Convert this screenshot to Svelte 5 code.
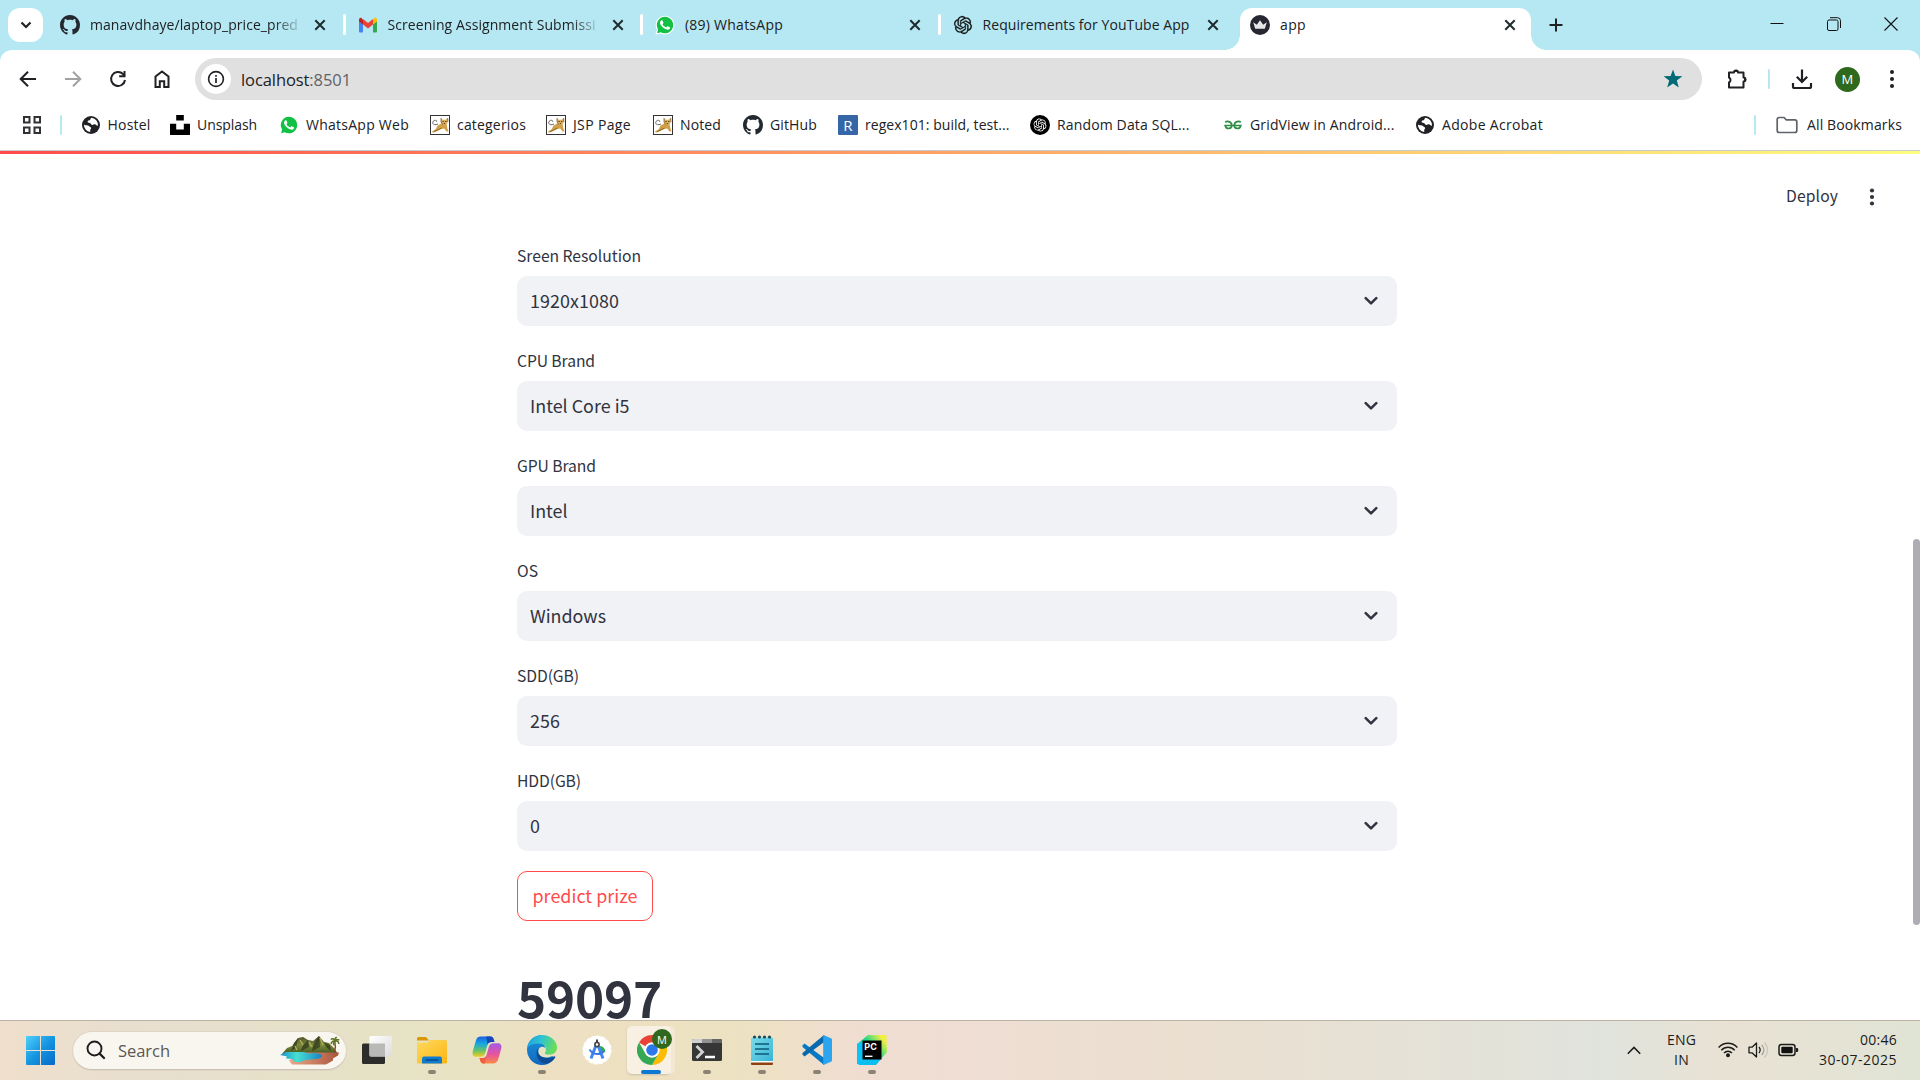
<script>
  const tabs = [
    { icon: 'github', fade: true, width: 208, title: 'manavdhaye/laptop_price_pred' },
    { icon: 'gmail', fade: true, width: 208, title: 'Screening Assignment Submissi' },
    { icon: 'whatsapp', width: 98, title: '(89) WhatsApp' },
    { icon: 'openai', width: 207, title: 'Requirements for YouTube App' }
  ];

  const bookmarks = [
    { icon: 'globe', label: 'Hostel', span: 89.5, text: 43 },
    { icon: 'unsplash', label: 'Unsplash', span: 109, text: 60 },
    { icon: 'whatsapp', label: 'WhatsApp Web', span: 151, text: 103 },
    { icon: 'cat', label: 'categerios', span: 116, text: 69 },
    { icon: 'cat', label: 'JSP Page', span: 107, text: 58 },
    { icon: 'cat', label: 'Noted', span: 90, text: 41 },
    { icon: 'github', label: 'GitHub', span: 95, text: 47 },
    { icon: 'regex', label: 'regex101: build, test...', span: 192, text: 144.5 },
    { icon: 'openaiDark', label: 'Random Data SQL...', span: 193, text: 132.5 },
    { icon: 'gfg', label: 'GridView in Android...', span: 192, text: 144.5 },
    { icon: 'globe', label: 'Adobe Acrobat', span: 150, text: 101 }
  ];

  const fields = [
    { label: 'Sreen Resolution', value: '1920x1080', lw: 124, vw: 89 },
    { label: 'CPU Brand', value: 'Intel Core i5', lw: 78, vw: 99.5 },
    { label: 'GPU Brand', value: 'Intel', lw: 79, vw: 37.5 },
    { label: 'OS', value: 'Windows', lw: 21, vw: 76 },
    { label: 'SDD(GB)', value: '256', lw: 62, vw: 30 },
    { label: 'HDD(GB)', value: '0', lw: 64, vw: 10 }
  ];

  const apps = [
    { icon: 'taskview' },
    { icon: 'explorer', open: true },
    { icon: 'copilot' },
    { icon: 'edge', open: true },
    { icon: 'android' },
    { icon: 'chrome', active: true },
    { icon: 'terminal', open: true },
    { icon: 'notepad', open: true },
    { icon: 'vscode', open: true },
    { icon: 'pycharm', open: true }
  ];

  const githubPath =
    'M8 0C3.58 0 0 3.58 0 8c0 3.54 2.29 6.53 5.47 7.59.4.07.55-.17.55-.38 0-.19-.01-.82-.01-1.49-2.01.37-2.53-.49-2.69-.94-.09-.23-.48-.94-.82-1.13-.28-.15-.68-.52-.01-.53.63-.01 1.08.58 1.23.82.72 1.21 1.87.87 2.33.66.07-.52.28-.87.51-1.07-1.78-.2-3.64-.89-3.64-3.95 0-.87.31-1.59.82-2.15-.08-.2-.36-1.02.08-2.12 0 0 .67-.21 2.2.82.64-.18 1.32-.27 2-.27s1.36.09 2 .27c1.53-1.04 2.2-.82 2.2-.82.44 1.1.16 1.92.08 2.12.51.56.82 1.27.82 2.15 0 3.07-1.87 3.75-3.65 3.95.29.25.54.73.54 1.48 0 1.07-.01 1.93-.01 2.2 0 .21.15.46.55.38A8.01 8.01 0 0 0 16 8c0-4.42-3.58-8-8-8z';
  const knotPath =
    'M22.2819 9.8211a5.9847 5.9847 0 0 0-.5157-4.9108 6.0462 6.0462 0 0 0-6.5098-2.9A6.0651 6.0651 0 0 0 4.9807 4.1818a5.9847 5.9847 0 0 0-3.9977 2.9 6.0462 6.0462 0 0 0 .7427 7.0966 5.98 5.98 0 0 0 .511 4.9107 6.051 6.051 0 0 0 6.5146 2.9001A5.9847 5.9847 0 0 0 13.2599 24a6.0557 6.0557 0 0 0 5.7718-4.2058 5.9894 5.9894 0 0 0 3.9977-2.9001 6.0557 6.0557 0 0 0-.7475-7.0729zm-9.022 12.6081a4.4755 4.4755 0 0 1-2.8764-1.0408l.1419-.0804 4.7783-2.7582a.7948.7948 0 0 0 .3927-.6813v-6.7369l2.02 1.1686a.071.071 0 0 1 .038.052v5.5826a4.504 4.504 0 0 1-4.4945 4.4944zm-9.6607-4.1254a4.4708 4.4708 0 0 1-.5346-3.0137l.142.0852 4.783 2.7582a.7712.7712 0 0 0 .7806 0l5.8428-3.3685v2.3324a.0804.0804 0 0 1-.0332.0615L9.74 19.9502a4.4992 4.4992 0 0 1-6.1408-1.6464zM2.3408 7.8956a4.485 4.485 0 0 1 2.3655-1.9728V11.6a.7664.7664 0 0 0 .3879.6765l5.8144 3.3543-2.0201 1.1685a.0757.0757 0 0 1-.071 0l-4.8303-2.7865A4.504 4.504 0 0 1 2.3408 7.872zm16.5963 3.8558L13.1038 8.364 15.1192 7.2a.0757.0757 0 0 1 .071 0l4.8303 2.7913a4.4944 4.4944 0 0 1-.6765 8.1042v-5.6772a.79.79 0 0 0-.407-.667zm2.0107-3.0231l-.142-.0852-4.7735-2.7818a.7759.7759 0 0 0-.7854 0L9.409 9.2297V6.8974a.0662.0662 0 0 1 .0284-.0615l4.8303-2.7866a4.4992 4.4992 0 0 1 6.6802 4.66zM8.3065 12.863l-2.02-1.1638a.0804.0804 0 0 1-.038-.0567V6.0742a4.4992 4.4992 0 0 1 7.3757-3.4537l-.142.0805L8.704 5.459a.7948.7948 0 0 0-.3927.6813zm1.0976-2.3654l2.602-1.4998 2.6069 1.4998v2.9994l-2.5974 1.4997-2.6067-1.4997Z';
  const handsetPath =
    'M17.472 14.382c-.297-.149-1.758-.867-2.03-.967-.273-.099-.471-.148-.67.15-.197.297-.767.966-.94 1.164-.173.199-.347.223-.644.075-.297-.15-1.255-.463-2.39-1.475-.883-.788-1.48-1.761-1.653-2.059-.173-.297-.018-.458.13-.606.134-.133.298-.347.446-.52.149-.174.198-.298.298-.497.099-.198.05-.371-.025-.52-.075-.149-.669-1.612-.916-2.207-.242-.579-.487-.5-.669-.51-.173-.008-.371-.01-.57-.01-.198 0-.52.074-.792.372-.272.297-1.04 1.016-1.04 2.479 0 1.462 1.065 2.875 1.213 3.074.149.198 2.096 3.2 5.077 4.487.709.306 1.262.489 1.694.625.712.227 1.36.195 1.871.118.571-.085 1.758-.719 2.006-1.413.248-.694.248-1.289.173-1.413-.074-.124-.272-.198-.57-.347';

  // Tracks a label so that its run has the given width in pixels.
  function fit(node, width) {
    const natural = node.getBoundingClientRect().width;
    const count = node.textContent.length;
    if (count > 1) node.style.letterSpacing = `${(width - natural) / count}px`;
  }
</script>

{#snippet favicon(name)}
  {#if name === 'github'}
    <svg width="20" height="20" viewBox="0 0 16 16"><path fill="#24292f" d={githubPath} /></svg>
  {:else if name === 'gmail'}
    <svg width="20" height="20" viewBox="0 0 20 20">
      <path fill="#4285f4" d="M1 5v11.200c0 .7.5 1.300 1.300 1.300H5V8.500z" />
      <path fill="#34a853" d="M15 8.500v9h2.700c.8 0 1.300-.6 1.300-1.300V5z" />
      <path fill="#c5221f" d="M1 4.800v1.600l4 3.200V5L3.600 3C2.500 2.200 1 3 1 4.800z" />
      <path fill="#fbbc04" d="M19 4.800v1.600l-4 3.200V5l1.400-2C17.500 2.200 19 3 19 4.800z" />
      <path fill="#ea4335" d="M5 4l5 4 5-4v5.500l-5 4-5-4z" />
    </svg>
  {:else if name === 'whatsapp'}
    <svg width="20" height="20" viewBox="0 0 24 24">
      <path fill="#fff" d="M12 .8a11.300 11.300 0 1 1-5.300 21.300L.5 23.600l1.700-6A11.300 11.300 0 0 1 12 .8z" />
      <path fill="#12c143" d="M12 2.200a9.900 9.900 0 1 1-5 18.500L2.500 21.800l1.200-4.500A9.900 9.900 0 0 1 12 2.200z" />
      <path fill="#fff" d={handsetPath} />
    </svg>
  {:else if name === 'openai'}
    <svg width="20" height="20" viewBox="-1.500 -1.500 27 27"><path fill="#111" stroke="#111" stroke-width=".35" d={knotPath} /></svg>
  {:else if name === 'openaiDark'}
    <svg width="20" height="20" viewBox="0 0 24 24">
      <circle cx="12" cy="12" r="12" fill="#000" />
      <path transform="translate(4.200 4.200) scale(.65)" fill="#fff" d={knotPath} />
    </svg>
  {:else if name === 'globe'}
    <svg width="20" height="20" viewBox="0 0 20 20">
      <circle cx="10" cy="10" r="9" fill="#202124" />
      <path fill="#fff" d="M10.200 2.800c-.9 1-.4 1.700-1.300 2.300-1 .7-2.100.4-2.300 1.500-.2 1.200 1 1.300 2 1.300 1.400 0 1.300 1.700 2.500 2 1.100.2 1.700-.7 2.700-.6 1.400.1 1.500 1.600 3.100 1.400A7.200 7.200 0 0 0 10.200 2.800z" />
      <path fill="#fff" d="M2.900 9.500c1.100.8 2.700.7 4 1 1.200.3 1.500 1.200 2.400 1.600 1 .4 1.100 1.300.4 2-.6.6-.4 1.400-.5 2.800A7.200 7.200 0 0 1 2.900 9.500z" />
    </svg>
  {:else if name === 'unsplash'}
    <svg width="20" height="20" viewBox="0 0 20 20"><path d="M6.200 0h7.600v5.600H6.200zM0 8.800h6.200v5.600h7.600V8.800H20V20H0z" /></svg>
  {:else if name === 'cat'}
    <svg width="20" height="20" viewBox="0 0 20 20">
      <rect x=".5" y=".5" width="19" height="19" fill="#fff" stroke="#333" />
      <path fill="none" stroke="#555" stroke-width=".9" d="M8 9C4 11 1.600 8.500 3.200 6.300 4.500 4.800 7 5 6.800 6.800" />
      <path fill="#d3a04a" d="M7.500 10.500l3.800-2 5.200.5.800 4 1.200 3.500h-2l-2.300-3-3 .5-3.700 2-4.500 1.700-1-1.200 3.500-2z" />
      <path fill="#dcae5c" d="M11 3l1.700 1.700h2.800L17.700 3l.2 4-1.600 2.700h-3.600L11 7.200z" />
      <path fill="none" stroke="#6a4d1e" stroke-width=".7" d="M11 3v4l1.700 2.700M17.700 3l.2 4M4 16.500l4.500-2 3-1.500" />
      <path fill="#222" d="M12.600 6h1v1h-1zM15.300 6h1v1h-1zM13.800 8h1.300v.7h-1.300z" />
    </svg>
  {:else if name === 'regex'}
    <span class="regex">R</span>
  {:else if name === 'gfg'}
    <svg width="20" height="20" viewBox="0 0 20 20" fill="none" stroke="#2f8d46" stroke-width="1.700">
      <path d="M2.300 7.300C3.500 6 8.300 5.800 8.800 10.200c0 4-5.800 4.600-6.600.3H17.800c-.8 4.300-6.600 3.700-6.600-.3.500-4.400 5.300-4.200 6.500-2.900" />
    </svg>
  {:else if name === 'crown'}
    <svg width="20" height="20" viewBox="0 0 20 20">
      <circle cx="10" cy="10" r="10" fill="#262730" />
      <path fill="#e8e8ea" d="M3.200 7.300l3.600 2.500L10 5.300l3.200 4.500 3.600-2.500-2 6.500H5.200z" />
    </svg>
  {/if}
{/snippet}

{#snippet cross()}
  <svg class="cross" width="12" height="12" viewBox="0 0 12 12"><path d="M1.300 1.300l9.400 9.400M10.700 1.300l-9.400 9.400" stroke="#1f2a2e" stroke-width="2" /></svg>
{/snippet}

{#snippet appIcon(name)}
  {#if name === 'taskview'}
    <svg width="30" height="30" viewBox="0 0 30 30">
      <defs>
        <linearGradient id="tv" x2="1" y2="1"><stop stop-color="#fff" /><stop offset="1" stop-color="#dcdcdc" /></linearGradient>
      </defs>
      <rect x="0" y="8.500" width="23" height="20.500" rx="1.500" fill="#2c2c2a" />
      <rect x="7.500" y="1" width="22.500" height="20.500" rx="1.500" fill="url(#tv)" />
      <path d="M7.500 8.500H23V21.500H9a1.500 1.500 0 0 1-1.500-1.500z" fill="#b9b9b7" />
    </svg>
  {:else if name === 'explorer'}
    <svg width="30" height="30" viewBox="0 0 30 30">
      <defs>
        <linearGradient id="fo" x2="1" y2="1"><stop stop-color="#ffd95e" /><stop offset="1" stop-color="#fbb612" /></linearGradient>
      </defs>
      <path d="M0 3.500A1.500 1.500 0 0 1 1.500 2H9l3 3.500H0z" fill="#dc9605" />
      <path d="M0 7.500h10.500l3-2.500h15A1.500 1.500 0 0 1 30 6.500v21a1 1 0 0 1-1 1H1a1 1 0 0 1-1-1z" fill="url(#fo)" />
      <path d="M5 28.500V23.500a2 2 0 0 1 2-2h16a2 2 0 0 1 2 2v5z" fill="#117ccf" />
      <path d="M8.500 25h13" stroke="#063f78" stroke-width="1.200" />
    </svg>
  {:else if name === 'copilot'}
    <svg width="30" height="30" viewBox="0 0 30 30">
      <defs>
        <linearGradient id="cp1" x2="0" y2="1"><stop stop-color="#1c5fdc" /><stop offset=".35" stop-color="#16a6e3" /><stop offset=".7" stop-color="#67c368" /><stop offset="1" stop-color="#f7cb21" /></linearGradient>
        <linearGradient id="cp2" x2="0" y2="1"><stop stop-color="#a35be8" /><stop offset=".55" stop-color="#e7549b" /><stop offset="1" stop-color="#fa8a45" /></linearGradient>
      </defs>
      <path d="M9 1.500h9.500c2 0 2.800 1.500 3.400 3.500l.6 2h-3c-2.500 0-3.500 1-4.200 3.500L13.200 18c-.8 2.500-2.200 3.700-4.700 3.700H4c-3 0-4-2.500-3.200-5.500l3-10.500c.8-2.700 2.300-4.200 5.200-4.200z" fill="url(#cp1)" />
      <path d="M21 28.500h-9.500c-2 0-2.800-1.500-3.400-3.500l-.6-2h3c2.500 0 3.500-1 4.200-3.500l2.100-7.500c.8-2.500 2.200-3.700 4.700-3.700H26c3 0 4 2.500 3.200 5.500l-3 10.500c-.8 2.700-2.300 4.200-5.200 4.200z" fill="url(#cp2)" />
      <path d="M14.300 1.500h4.200c2 0 2.800 1.500 3.400 3.500l.6 2h-3c-2.200 0-3.300.8-4 2.800z" fill="#1547b8" />
      <path d="M7.500 23h3c2.200 0 3.300-.8 4-2.800l-1.500 8.300h-1.500c-2 0-2.800-1.500-3.400-3.500z" fill="#f0603e" />
    </svg>
  {:else if name === 'edge'}
    <svg width="30" height="30" viewBox="0 0 30 30">
      <defs>
        <linearGradient id="ed1" x2="1" y2=".3"><stop stop-color="#1d9be0" /><stop offset=".5" stop-color="#2fc4d2" /><stop offset="1" stop-color="#66dd5c" /></linearGradient>
        <linearGradient id="ed2" x2="0" y2="1"><stop stop-color="#1a94dc" /><stop offset="1" stop-color="#1168bd" /></linearGradient>
      </defs>
      <path d="M15 0a15 15 0 1 0 13.300 22L20 19.800l-2-7z" fill="url(#ed2)" />
      <path d="M.3 12C1.500 5 7.500 0 15 0c8.500 0 15 6 15 12.500 0 4.500-3.500 7.300-7.600 7.300-3.200 0-5-1.200-4.200-2.600 2.600-4-1-9-7-8.700C6.500 8.700 2.500 10 .3 12z" fill="url(#ed1)" />
      <path d="M10.500 14c-3.500 8 3 15 9 14.800 3.500-.8 7-3.500 8.800-6.500.3-.6-.3-1-.9-.7C19 25.500 9.500 21.500 11.800 13.500z" fill="#0f4c94" />
      <path d="M13 12.600c-2.300 2-2.200 5.600.2 8 2.500 2 6 2.300 8.800 1.600l5-1.800-.5-1.500c-3.500 1.500-8.500 1-8.500-1.200 1.600-1.600 1.200-3.600-.2-4.900-1.400-1.100-3.400-1.300-4.800-.2z" fill="#e9e3c2" />
    </svg>
  {:else if name === 'android'}
    <svg width="30" height="30" viewBox="0 0 30 30">
      <circle cx="15" cy="15" r="13.600" fill="#fff" />
      <circle cx="15" cy="15" r="13.600" fill="none" stroke="#fff" stroke-width="1.800" stroke-dasharray="3 2.300" stroke-linecap="round" />
      <path d="M18 11c3.500.5 5.500 3 5.200 6L18 19z" fill="#34a853" />
      <path d="M14.300 9.500L9 23.500M15.700 9.500L21 23.500" stroke="#4285f4" stroke-width="3" />
      <path d="M7.500 14.500c3.500 5.500 10.500 6 14.500 1.500" fill="none" stroke="#3b78e0" stroke-width="2" />
      <path d="M15 4.500v3" stroke="#444" stroke-width="2" /><circle cx="15" cy="9.500" r="2.100" fill="#fff" stroke="#444" stroke-width="1.600" />
    </svg>
  {:else if name === 'chrome'}
    <svg width="30" height="30" viewBox="0 0 48 48">
      <path fill="#ea4335" d="M24 0a24 24 0 0 1 20.800 12H24A12 12 0 0 0 13.600 18L3.200 12A24 24 0 0 1 24 0z" />
      <path fill="#fbbc04" d="M44.800 12A24 24 0 0 1 24 48l10.400-18A12 12 0 0 0 34.400 18L30 12z" />
      <path fill="#34a853" d="M3.200 12A24 24 0 0 0 24 48l10.400-18a12 12 0 0 1-20.800 0z" />
      <circle cx="24" cy="24" r="12" fill="#fff" /><circle cx="24" cy="24" r="9.300" fill="#2c78ea" />
    </svg>
  {:else if name === 'terminal'}
    <svg width="30" height="30" viewBox="0 0 30 30">
      <rect y="4" width="30" height="22" rx="1.500" fill="#363636" />
      <path d="M0 8V5.500A1.500 1.500 0 0 1 1.500 4H10v4z" fill="#cfcfcf" /><path d="M10 4h10v4H10z" fill="#929292" /><path d="M20 4h8.500A1.500 1.500 0 0 1 30 5.500V8H20z" fill="#666" />
      <path d="M4.500 11l6 6-6 6" fill="none" stroke="#d2d2d2" stroke-width="2.800" /><path d="M13 22h10" stroke="#fff" stroke-width="2.500" />
    </svg>
  {:else if name === 'notepad'}
    <svg width="30" height="30" viewBox="0 0 30 30">
      <defs><linearGradient id="np" x2="1" y2="1"><stop stop-color="#7adcea" /><stop offset="1" stop-color="#39b4d6" /></linearGradient></defs>
      <path d="M4 27h22v2a1 1 0 0 1-1 1H5a1 1 0 0 1-1-1z" fill="#8f4210" /><path d="M4 25.800h22v1.700H4z" fill="#fff" />
      <path d="M4 4a1.500 1.500 0 0 1 1.500-1.500h19A1.500 1.500 0 0 1 26 4v22H4z" fill="url(#np)" />
      <path d="M8 9h14M8 14h14M8 19h14" stroke="#0c5877" stroke-width="1.700" />
      <g fill="#16495c"><circle cx="7.500" cy="2" r="1.600" /><circle cx="12.500" cy="2" r="1.600" /><circle cx="17.500" cy="2" r="1.600" /><circle cx="22.500" cy="2" r="1.600" /></g>
    </svg>
  {:else if name === 'vscode'}
    <svg width="30" height="30" viewBox="0 0 30 30">
      <path d="M.5 10.500l2-2 21 15.500L22 30 .5 12z" fill="#0879c4" />
      <path d="M.5 19.500l2 2 21-15.500L22 0 .5 18z" fill="#0969ae" />
      <path d="M21.500 0L29 3.200a1.500 1.500 0 0 1 1 1.300v21a1.500 1.500 0 0 1-1 1.300L21.500 30c-.6-.2-.3-.8-.3-1.500V1.500c0-.7-.3-1.300.3-1.500z" fill="#2ba5f0" />
    </svg>
  {:else if name === 'pycharm'}
    <svg width="30" height="30" viewBox="0 0 30 30">
      <defs><linearGradient id="pc" x1="0" y1=".8" x2="1" y2="0"><stop stop-color="#08cdf5" /><stop offset=".5" stop-color="#21d789" /><stop offset=".85" stop-color="#f0ef42" /></linearGradient></defs>
      <path d="M0 9L11 0h18.500l.5 17-11 12.500L0 29z" fill="url(#pc)" /><path d="M0 9l6-2v23H2l-2-2z" fill="#08c3f5" /><path d="M5 24h19l-5 6H3z" fill="#0abef0" />
      <rect x="5.500" y="5.500" width="19" height="19" /><path d="M8 21.300h7.500" stroke="#fff" stroke-width="1.400" />
      <text x="7.300" y="15" class="pc">PC</text>
    </svg>
  {/if}
{/snippet}

<div class="screen">
  <header class="strip">
    <div class="search-tabs">
      <svg width="12" height="12" viewBox="0 0 12 12"><path d="M1.500 3.500L6 8l4.500-4.500" fill="none" stroke="#202124" stroke-width="2.200" /></svg>
    </div>
    {#each tabs as tab, i}
      <div class="tab" class:first={i === 0}>
        {@render favicon(tab.icon)}
        <div class="tab-title" class:fade={tab.fade}><span use:fit={tab.width}>{tab.title}</span></div>
        {@render cross()}
        {#if i < 3}<i class="tab-sep"></i>{/if}
      </div>
    {/each}
    <div class="tab active">
      {@render favicon('crown')}
      <div class="tab-title"><span use:fit={26}>app</span></div>
      {@render cross()}
    </div>
    <svg class="plus" width="14" height="14" viewBox="0 0 14 14"><path d="M7 .5v13M.5 7h13" stroke="#202124" stroke-width="2" /></svg>
    <div class="window">
      <svg width="14" height="14" viewBox="0 0 14 14"><path d="M.5 6.500h13" stroke="#111" stroke-width="1" /></svg>
      <svg width="14" height="14" viewBox="0 0 14 14" fill="none" stroke="#111"><rect x=".5" y="3" width="10.500" height="10.500" rx="1.500" /><path d="M3 .7h7.500a3 3 0 0 1 3 3V11" /></svg>
      <svg width="14" height="14" viewBox="0 0 14 14"><path d="M.5.500l13 13M13.500.500l-13 13" stroke="#111" stroke-width="1.100" /></svg>
    </div>
  </header>

  <div class="chrome">
    <nav class="toolbar">
      <svg width="20" height="20" viewBox="0 0 20 20"><path d="M18 10H3.500M10 2.700L2.700 10l7.300 7.300" fill="none" stroke="#202124" stroke-width="2" /></svg>
      <svg width="20" height="20" viewBox="0 0 20 20"><path d="M2 10h14.500M10 2.700l7.300 7.300-7.300 7.300" fill="none" stroke="#a1a1a1" stroke-width="2" /></svg>
      <svg width="20" height="20" viewBox="0 0 20 20"><path d="M17 11a7 7 0 1 1-2-6l1.500 1.500" fill="none" stroke="#202124" stroke-width="2" /><path d="M17.500 2v6.300h-6.300V6.300h4.300V2z" fill="#202124" /></svg>
      <svg width="20" height="20" viewBox="0 0 20 20"><path d="M3.500 7.500L10 2.500l6.500 5V18h-4.300v-5.700H7.800V18H3.500z" fill="none" stroke="#202124" stroke-width="2" /></svg>
      <div class="omnibox">
        <span class="info"><svg width="18" height="18" viewBox="0 0 18 18"><circle cx="9" cy="9" r="7.400" fill="none" stroke="#202124" stroke-width="1.600" /><path d="M9 8v5M9 5v1.800" stroke="#202124" stroke-width="1.700" /></svg></span>
        <span class="url" use:fit={110}>localhost<em>:8501</em></span>
        <svg class="star" width="20" height="20" viewBox="0 0 20 20"><path d="M10 .5l2.400 6.600 7 .2-5.600 4.300 2 6.900L10 14.400l-5.800 4.100 2-6.900L.6 7.300l7-.2z" fill="#006a77" /></svg>
      </div>
      <div class="actions">
        <svg width="22" height="22" viewBox="0 0 22 22"><path d="M3 4.500h5a2 2 0 0 1 4 0h5.500v5a2 2 0 0 1 0 4v6H3v-5a2.800 2.800 0 0 0 0-5z" fill="none" stroke="#202124" stroke-width="2" stroke-linejoin="round" /><path d="M8 4a2.200 2.200 0 0 1 4.400 0zM18 9.500a2.200 2.200 0 0 1 0 4.400z" fill="#202124" /></svg>
        <i class="sep"></i>
        <svg width="22" height="22" viewBox="0 0 22 22" fill="none" stroke="#202124" stroke-width="2.200"><path d="M11 1.500v12M5.800 8.800l5.200 5.200 5.200-5.200M2 15v3.500a1.500 1.500 0 0 0 1.500 1.500h15a1.500 1.500 0 0 0 1.500-1.500V15" /></svg>
        <span class="avatar">M</span>
        <svg width="6" height="20" viewBox="0 0 6 20" fill="#202124"><circle cx="3" cy="3" r="2" /><circle cx="3" cy="10" r="2" /><circle cx="3" cy="17" r="2" /></svg>
      </div>
    </nav>

    <nav class="bookmarks">
      <svg class="grid" width="20" height="20" viewBox="0 0 20 20" fill="none" stroke="#303134" stroke-width="2"><path d="M2 2h5.500v5.500H2zM12.500 2H18v5.500h-5.500zM2 12.500h5.500V18H2zM12.500 12.500H18V18h-5.500z" /></svg>
      <i class="sep"></i>
      <div class="marks">
        {#each bookmarks as b}
          <div class="mark" style:width="{b.span}px">
            {@render favicon(b.icon)}<span use:fit={b.text}>{b.label}</span>
          </div>
        {/each}
      </div>
      <i class="sep"></i>
      <svg class="folder" width="22" height="18" viewBox="0 0 22 18"><path d="M1.200 3.500a2 2 0 0 1 2-2H8l2.300 2.300h8.500a2 2 0 0 1 2 2v8.700a2 2 0 0 1-2 2H3.200a2 2 0 0 1-2-2z" fill="none" stroke="#5f6368" stroke-width="1.700" /></svg>
      <span use:fit={95}>All Bookmarks</span>
    </nav>
  </div>

  <main>
    <div class="decoration"></div>
    <div class="apphead">
      <span class="deploy" use:fit={52}>Deploy</span>
      <svg width="6" height="18" viewBox="0 0 6 18" fill="#31333f"><circle cx="3" cy="2.500" r="2.100" /><circle cx="3" cy="9" r="2.100" /><circle cx="3" cy="15.500" r="2.100" /></svg>
    </div>
    <form>
      {#each fields as f}
        <div class="field">
          <label for={f.label}><span use:fit={f.lw}>{f.label}</span></label>
          <div class="select" id={f.label}>
            <span use:fit={f.vw}>{f.value}</span>
            <svg width="14" height="10" viewBox="0 0 14 10"><path d="M1.700 2.200L7 7.400l5.300-5.200" fill="none" stroke="#31333f" stroke-width="2.500" stroke-linecap="round" stroke-linejoin="round" /></svg>
          </div>
        </div>
      {/each}
      <button type="button"><span use:fit={105}>predict prize</span></button>
      <h1><span use:fit={145}>59097</span></h1>
    </form>
    <div class="scrollbar"></div>
  </main>

  <footer>
    <svg class="start" width="29" height="29" viewBox="0 0 29 29">
      <defs><linearGradient id="win" x2="1" y2="1"><stop stop-color="#4fd0fb" /><stop offset=".5" stop-color="#1595e0" /><stop offset="1" stop-color="#0669c8" /></linearGradient></defs>
      <path fill="url(#win)" d="M1 0h13v14H0V1a1 1 0 0 1 1-1zM15 0h13a1 1 0 0 1 1 1v13H15zM0 15h14v14H1a1 1 0 0 1-1-1zM15 15h14v13a1 1 0 0 1-1 1H15z" />
    </svg>
    <div class="searchbox">
      <svg width="20" height="20" viewBox="0 0 20 20"><circle cx="8.500" cy="8.500" r="7" fill="none" stroke="#1e1e1e" stroke-width="1.900" /><path d="M13.500 13.500L18 18" stroke="#1e1e1e" stroke-width="2.400" stroke-linecap="round" /></svg>
      <span use:fit={52}>Search</span>
      <svg class="island" width="60" height="30" viewBox="0 0 60 30">
        <defs>
          <linearGradient id="sea" x2="1"><stop stop-color="#188fd0" /><stop offset=".4" stop-color="#47e0d2" /><stop offset="1" stop-color="#1b82c4" /></linearGradient>
          <linearGradient id="hill" x2="0" y2="1"><stop stop-color="#4a4d2c" /><stop offset=".5" stop-color="#7c8a3c" /><stop offset="1" stop-color="#40571f" /></linearGradient>
          <linearGradient id="sand" x2="1"><stop stop-color="#eba88a" /><stop offset="1" stop-color="#a8553a" /></linearGradient>
        </defs>
        <path d="M2 19l5-6 5-2 6-8 5-1 5 3 5 1 6-5 5 6 5 1 5 5 4 6z" fill="url(#hill)" />
        <path d="M18 3l-4 5-3 8 5-3zM28 5l-5 5-2 6 8-4zM39 1l-5 7-2 8 8-4zM44 7l2 5 5 4-1-6z" fill="#2f381c" opacity=".75" />
        <path d="M20 5l3 5M29 7l3 5M40 3l3 7M15 11l2 4" stroke="#b5b35c" stroke-width="1.300" fill="none" />
        <path d="M22 17.500h37l-1 3-5 3v2l-7 4H12l-3-4z" fill="url(#sand)" />
        <path d="M0 20l6-3h18l4 1.500c10-1 15 .5 14 3-1 2.300-6 2.500-11 3-5 .4-8 1-10 2.500h-6l-3-3-6-.5 1-2z" fill="url(#sea)" />
        <path d="M54.500 17.500c1.300-4 1-8 .3-11" stroke="#794b24" stroke-width="1.400" fill="none" />
        <path d="M55 6.300C54.500 4 52.500 3 50.800 4.500M55 6.300C53 5.500 51 7 51.300 9M55 6.300c2-.8 3.800.3 3.800 2.700M55 6.300c1-2 3-2.300 4.200-1M55 6.300c-.6-2 .3-3.600 1.800-4.200M55 6.300c-1.500 1-1.700 2.500-1.200 4" stroke="#5f7327" stroke-width="1.500" fill="none" />
      </svg>
    </div>
    <div class="apps">
      {#each apps as a}
        <div class="app" class:current={a.active}>
          {@render appIcon(a.icon)}
          {#if a.active}<span class="badge">M</span>{/if}
          {#if a.open || a.active}<i class="running"></i>{/if}
        </div>
      {/each}
    </div>
    <div class="tray">
      <svg class="up" width="14" height="9" viewBox="0 0 14 9"><path d="M.8 7.800L7 1.500l6.200 6.300" fill="none" stroke="#1c1c1c" stroke-width="1.600" /></svg>
      <div class="lang"><span use:fit={29}>ENG</span><span use:fit={15}>IN</span></div>
      <svg class="wifi" width="20" height="16" viewBox="0 0 20 16" fill="none" stroke="#1c1c1c" stroke-width="1.400"><path d="M.6 5.500c5.200-5.600 13.600-5.600 18.800 0M3.300 8.300c3.700-4 9.700-4 13.400 0M6 11c2.200-2.400 5.800-2.400 8 0" /><circle cx="10" cy="13.300" r="1.300" fill="#1c1c1c" /></svg>
      <svg class="sound" width="21" height="18" viewBox="0 0 21 18" fill="none" stroke="#1c1c1c" stroke-width="1.300"><path d="M1 6.200h3L8.500 2v14L4 11.800H1z" stroke-linejoin="round" /><path d="M11 6c1.400 1.800 1.400 4.200 0 6" /><path d="M13.800 3.800c2.600 3.200 2.600 7.200 0 10.400" stroke="#a3a69d" /><path d="M16.500 1.500c4 4.600 4 10.400 0 15" stroke="#c2c6bb" /></svg>
      <svg class="battery" width="21" height="14" viewBox="0 0 21 14"><rect x="1" y="1.500" width="16" height="11" rx="2.500" fill="none" stroke="#1c1c1c" stroke-width="1.500" /><rect x="3.300" y="3.800" width="11.400" height="6.400" rx="1" fill="#111" /><path d="M18 5h1a1.200 1.200 0 0 1 1.200 1.200v1.600A1.200 1.200 0 0 1 19 9h-1z" fill="#1c1c1c" /></svg>
      <div class="clock"><span use:fit={37}>00:46</span><span use:fit={78}>30-07-2025</span></div>
    </div>
  </footer>
</div>

<style>
  :global(body) { background: #fff; overflow: hidden; }
  * { box-sizing: border-box; }
  svg { display: block; flex: none; }
  span { white-space: nowrap; }
  .screen {
    width: 1920px; height: 1080px; display: grid; grid-template-rows: 50px 100px 870px 60px;
    overflow: hidden; font-family: "Open Sans", "Noto Sans", sans-serif; font-size: 14px; color: #202124; background: #fff;
  }

  .strip { display: flex; background: #b5e8f2; padding-left: 8px; }
  .search-tabs { width: 35px; height: 34px; margin: 8px 17px 0 0; border-radius: 12px; background: #fff; display: grid; place-items: center; }
  .tab { position: relative; display: flex; align-items: center; width: 297.500px; padding-left: 10px; flex: none; }
  .tab.first { margin-left: -10px; }
  .tab-title { width: 209px; margin-left: 10px; overflow: hidden; display: flex; line-height: 20px; }
  .tab-title.fade { -webkit-mask-image: linear-gradient(90deg, #000 88%, transparent 102%); mask-image: linear-gradient(90deg, #000 88%, transparent 102%); }
  .cross { margin-left: 15px; }
  .tab-sep { position: absolute; right: 2px; top: 14px; width: 3px; height: 21px; border-radius: 2px; background: #fff; }
  .tab.active { background: #fff; width: 291px; height: 42px; margin-top: 8px; border-radius: 12px 12px 0 0; padding-bottom: 8px; }
  .tab.active::before, .tab.active::after { content: ""; position: absolute; bottom: 0; width: 15px; height: 15px; }
  .tab.active::before { right: 100%; background: radial-gradient(circle at 0 0, transparent 14.500px, #fff 15px); }
  .tab.active::after { left: 100%; background: radial-gradient(circle at 100% 0, transparent 14.500px, #fff 15px); }
  .plus { margin: 18px 0 0 18px; }
  .window { margin: 17px 22px 0 auto; display: flex; gap: 43px; }

  .chrome { background: linear-gradient(#b5e8f2 20px, #fff 20px); }
  .toolbar { height: 58px; background: #fff; border-radius: 12px 12px 0 0; display: flex; align-items: center; padding-left: 18px; gap: 24.800px; }
  .omnibox { flex: none; width: 1507px; height: 42px; margin-left: -2.200px; border-radius: 21px; background: #e0e0e0; display: flex; align-items: center; padding: 0 19px 0 6px; }
  .info { width: 30px; height: 30px; border-radius: 50%; background: #fff; display: grid; place-items: center; }
  .url { margin-left: 10px; font-size: 16.500px; color: #202124; }
  .url em { font-style: normal; color: #5f6368; }
  .star { margin-left: auto; }
  .actions { display: flex; align-items: center; margin-left: -1px; }
  .actions .sep { margin: 0 21px 0 20px; }
  .sep { width: 2px; height: 20px; background: #b5e8f2; border-radius: 1px; flex: none; }
  .avatar { width: 25px; height: 25px; margin: 0 29px 0 22px; border-radius: 50%; background: #2f691e; color: #fff; font-size: 13px; display: grid; place-items: center; }
  .bookmarks { height: 42px; background: #fff; display: flex; align-items: center; padding: 0 18px 8px 22px; line-height: 20px; }
  .grid { margin-right: 18px; }
  .marks { display: flex; flex: 1; padding-left: 18.500px; }
  .mark { display: flex; align-items: center; gap: 7px; flex: none; }
  .folder { margin: 0 9px 0 20px; }
  .regex { width: 20px; height: 20px; background: #3466a8; color: #fff; display: grid; place-items: center; font-size: 15px; border-radius: 1px; }

  main { position: relative; border-top: 1px solid #c8cbcc; overflow: hidden; font-family: "Noto Sans CJK JP", "Noto Sans", sans-serif; color: #31333f; }
  .decoration { height: 3px; background: linear-gradient(90deg, #ff4b4b, #fffd80); }
  .apphead { height: 85px; display: flex; justify-content: flex-end; align-items: center; gap: 31px; padding-right: 45px; font-size: 15.700px; line-height: 24px; }
  .deploy { padding-bottom: 1px; }
  form { width: 880px; margin: 0 0 0 517px; display: grid; justify-items: start; }
  .field { width: 880px; height: 105px; }
  label { height: 37px; display: flex; align-items: center; padding-bottom: 3px; font-size: 15.700px; line-height: 24px; }
  .select { height: 50px; background: #f0f2f6; border-radius: 10px; display: flex; align-items: center; justify-content: space-between; padding: 0 19px 0 13px; font-size: 17.900px; line-height: 30px; }
  .select span { padding-bottom: 2px; }
  button { width: 136px; height: 50px; margin-top: 2px; border: 1px solid #ff4b4b; border-radius: 10px; background: #fff; color: #ff4b4b; font: 17.900px/30px "Noto Sans CJK JP", "Noto Sans", sans-serif; padding: 0 0 2px; }
  h1 { margin: 43px 0 0; font-size: 49.500px; line-height: 66px; font-weight: 700; }
  .scrollbar { position: absolute; right: 0; top: 388px; width: 7px; height: 386px; border-radius: 4px; background: #adadb3; }

  footer {
    border-top: 1px solid #bcb3a6; display: flex; align-items: center;
    background: linear-gradient(90deg, #efdfcc 0, #e8dfd0 140px, #e6e1c8 300px, #e7e3c3 450px, #eee0c2 570px, #ece2c1 740px, #f0ddd2 860px, #efddd3 940px, #eadfd0 1200px, #e0e3dc 1600px, #e9e2d4 1730px, #e0e4d5 1920px);
  }
  .start { margin: 0 18px 0 26px; }
  .searchbox { width: 273px; height: 38px; border-radius: 19px; border-bottom: 1px solid #c9c2b3; box-shadow: 0 0 0 1px #ded5c4; background: #f9f6f0; display: flex; align-items: center; padding: 0 6px 0 13px; color: #5a5854; font-size: 16.500px; }
  .searchbox span { margin-left: 12px; }
  .island { margin-left: auto; }
  .apps { display: flex; margin-left: 3px; }
  .app { position: relative; width: 55px; height: 59px; display: grid; place-items: center; padding-bottom: 1px; }
  .app.current::before { content: ""; position: absolute; left: 3px; top: 5px; width: 44px; height: 48px; border-radius: 5px; background: #f8f0e2; box-shadow: 4px 0 0 #f3e8d4, 0 1px 2px #c9bfa9; }
  .app svg { position: relative; }
  .running { position: absolute; left: 24px; bottom: 6px; width: 8px; height: 4px; border-radius: 2px; background: #8a8272; }
  .current .running { left: 17px; width: 20px; background: #0a78d4; }
  .badge { position: absolute; left: 28px; top: 8px; width: 20px; height: 20px; border-radius: 50%; background: #2f691e; color: #fff; display: grid; place-items: center; font-size: 11px; }
  .pc { fill: #fff; font: 700 9px Inter, sans-serif; }
  .tray { margin-left: auto; display: flex; align-items: center; color: #1c1c1c; padding-bottom: 1px; }
  .lang, .clock { display: grid; line-height: 20px; font-size: 14px; }
  .lang { justify-items: center; margin: 0 22px 0 26px; }
  .clock { justify-items: end; margin: 0 23px 0 20px; }
  .sound { margin-left: 10px; }
  .battery { margin-left: 9px; }
</style>
